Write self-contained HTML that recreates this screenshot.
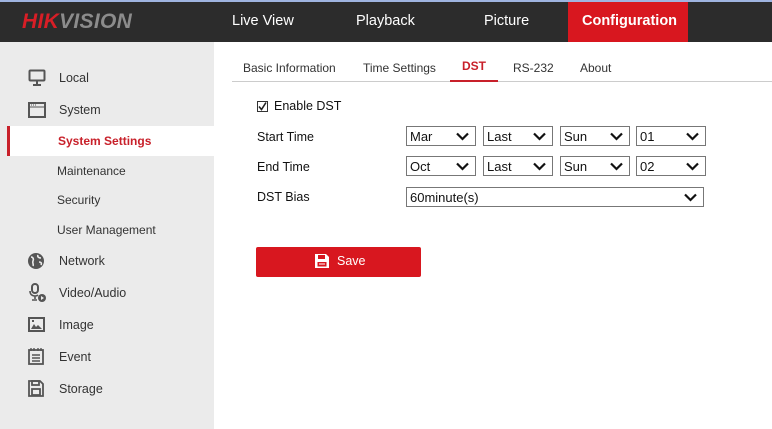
<!DOCTYPE html>
<html><head><meta charset="utf-8"><style>
*{margin:0;padding:0;box-sizing:border-box}
body{width:772px;height:429px;overflow:hidden;background:#fff;font-family:"Liberation Sans",Arial,sans-serif;position:relative}
.a{position:absolute}
.top{left:0;top:0;width:772px;height:42px;background:#2c2c2c;border-top:2px solid #9fb4e0}
.nav{color:#fff;font-size:14.5px;top:13px}
.side{left:0;top:42px;width:214px;height:387px;background:#ebebeb}
.si{font-size:12.5px;color:#333;left:59px}
.sub{font-size:12px;color:#333;left:57px}
.lbl{font-size:12.5px;color:#111}
.sel{height:20px;border:1px solid #777;background:#fff;font-size:13px;color:#111;padding:2px 0 0 3px}
.sel svg{position:absolute;right:6px;top:5px}
.tab{font-size:12px;color:#333;top:61px}
</style></head><body>
<div class="a top"></div>
<div class="a" style="left:22px;top:10px;font-size:21px;font-weight:bold;font-style:italic;letter-spacing:0.3px"><span style="color:#d81e26">HIK</span><span style="color:#8c8c8c">VISION</span></div>
<div class="a nav" style="left:232px">Live View</div>
<div class="a nav" style="left:356px">Playback</div>
<div class="a nav" style="left:484px">Picture</div>
<div class="a" style="left:568px;top:2px;width:120px;height:40px;background:#d8171f"></div>
<div class="a nav" style="left:582px;font-weight:bold">Configuration</div>

<div class="a side"></div>
<div class="a" style="left:7px;top:126px;width:207px;height:30px;background:#fff"></div>
<div class="a" style="left:7px;top:126px;width:3px;height:30px;background:#c8202a"></div>
<svg class="a" style="left:28px;top:69px" width="18" height="18" viewBox="0 0 18 18" fill="none" stroke="#555" stroke-width="2"><rect x="1.5" y="1.5" width="15" height="10" rx="1"/><path d="M9 12v3M5 16h8"/></svg>
<div class="a si" style="top:71px">Local</div>
<svg class="a" style="left:28px;top:102px" width="18" height="16" viewBox="0 0 18 16" fill="none" stroke="#555" stroke-width="2"><rect x="1" y="1" width="16" height="14"/><path d="M1 5h16" stroke-width="1"/><path d="M3 3h1M5 3h1M7 3h1" stroke-width="1"/></svg>
<div class="a si" style="top:103px">System</div>
<div class="a" style="left:58px;top:134px;font-size:12px;font-weight:bold;color:#c8202a">System Settings</div>
<div class="a sub" style="top:164px">Maintenance</div>
<div class="a sub" style="top:193px">Security</div>
<div class="a sub" style="top:223px">User Management</div>
<svg class="a" style="left:27px;top:252px" width="18" height="18" viewBox="0 0 18 18"><circle cx="9" cy="9" r="8" fill="#555"/><path d="M4 5c2 0 3 2 2 4s1 3 0 5M11 3c-1 2 1 3 3 3M12 10c2 0 3 1 2 3" stroke="#ebebeb" stroke-width="1.6" fill="none"/></svg>
<div class="a si" style="top:254px">Network</div>
<svg class="a" style="left:27px;top:283px" width="20" height="20" viewBox="0 0 20 20" fill="#555"><rect x="5" y="1" width="6" height="9" rx="3" fill="none" stroke="#555" stroke-width="2"/><path d="M3 8c0 4 3 5 5 5s3-1 3-1M8 13v3M5 17h5" stroke="#555" stroke-width="1.6" fill="none"/><circle cx="15" cy="15" r="4"/><path d="M14 13v4l3-2z" fill="#ebebeb"/></svg>
<div class="a si" style="top:286px">Video/Audio</div>
<svg class="a" style="left:28px;top:317px" width="17" height="15" viewBox="0 0 17 15"><rect x="1" y="1" width="15" height="13" fill="none" stroke="#555" stroke-width="2"/><path d="M3 12l3-5 2 3 2-2 4 4z" fill="#555"/><rect x="4" y="3" width="2" height="2" fill="#555"/></svg>
<div class="a si" style="top:318px">Image</div>
<svg class="a" style="left:28px;top:347px" width="16" height="18" viewBox="0 0 16 18" fill="none" stroke="#555" stroke-width="1.8"><rect x="1" y="3" width="14" height="14"/><path d="M3 1v3M6 1v3M10 1v3M13 1v3M4 8h8M4 11h8M4 14h8" stroke-width="1.4"/></svg>
<div class="a si" style="top:350px">Event</div>
<svg class="a" style="left:28px;top:380px" width="16" height="17" viewBox="0 0 16 17" fill="none" stroke="#555" stroke-width="1.8"><path d="M1 1h11l3 3v12H1z"/><rect x="4" y="1" width="7" height="4"/><rect x="4" y="9" width="8" height="6"/></svg>
<div class="a si" style="top:382px">Storage</div>

<div class="a tab" style="left:243px">Basic Information</div>
<div class="a tab" style="left:363px">Time Settings</div>
<div class="a tab" style="left:462px;color:#c8202a;font-weight:bold;top:59px">DST</div>
<div class="a tab" style="left:513px">RS-232</div>
<div class="a tab" style="left:580px">About</div>
<div class="a" style="left:232px;top:81px;width:540px;height:1px;background:#ccc"></div>
<div class="a" style="left:450px;top:80px;width:48px;height:2px;background:#c8202a"></div>

<svg class="a" style="left:257px;top:101px" width="11" height="11" viewBox="0 0 11 11"><rect x="0.5" y="0.5" width="10" height="10" fill="#fff" stroke="#333"/><path d="M2 5.5l2.5 3 4.5-7" stroke="#222" stroke-width="1.6" fill="none"/></svg>
<div class="a lbl" style="left:274px;top:99px">Enable DST</div>
<div class="a lbl" style="left:257px;top:130px">Start Time</div>
<div class="a lbl" style="left:257px;top:160px">End Time</div>
<div class="a lbl" style="left:257px;top:190px">DST Bias</div>

<div class="a sel" style="left:406px;top:126px;width:70px">Mar<svg width="13" height="9"><path d="M1 1.5l5.5 5.5 5.5-5.5" stroke="#111" stroke-width="2.2" fill="none"/></svg></div>
<div class="a sel" style="left:483px;top:126px;width:70px">Last<svg width="13" height="9"><path d="M1 1.5l5.5 5.5 5.5-5.5" stroke="#111" stroke-width="2.2" fill="none"/></svg></div>
<div class="a sel" style="left:560px;top:126px;width:70px">Sun<svg width="13" height="9"><path d="M1 1.5l5.5 5.5 5.5-5.5" stroke="#111" stroke-width="2.2" fill="none"/></svg></div>
<div class="a sel" style="left:636px;top:126px;width:70px">01<svg width="13" height="9"><path d="M1 1.5l5.5 5.5 5.5-5.5" stroke="#111" stroke-width="2.2" fill="none"/></svg></div>
<div class="a sel" style="left:406px;top:156px;width:70px">Oct<svg width="13" height="9"><path d="M1 1.5l5.5 5.5 5.5-5.5" stroke="#111" stroke-width="2.2" fill="none"/></svg></div>
<div class="a sel" style="left:483px;top:156px;width:70px">Last<svg width="13" height="9"><path d="M1 1.5l5.5 5.5 5.5-5.5" stroke="#111" stroke-width="2.2" fill="none"/></svg></div>
<div class="a sel" style="left:560px;top:156px;width:70px">Sun<svg width="13" height="9"><path d="M1 1.5l5.5 5.5 5.5-5.5" stroke="#111" stroke-width="2.2" fill="none"/></svg></div>
<div class="a sel" style="left:636px;top:156px;width:70px">02<svg width="13" height="9"><path d="M1 1.5l5.5 5.5 5.5-5.5" stroke="#111" stroke-width="2.2" fill="none"/></svg></div>
<div class="a sel" style="left:406px;top:187px;width:298px">60minute(s)<svg width="13" height="9"><path d="M1 1.5l5.5 5.5 5.5-5.5" stroke="#111" stroke-width="2.2" fill="none"/></svg></div>

<div class="a" style="left:256px;top:247px;width:165px;height:30px;background:#d8171f;border-radius:2px"></div>
<svg class="a" style="left:315px;top:254px" width="14" height="14" viewBox="0 0 14 14" fill="#fff"><path d="M0 0h11l3 3v11H0z"/><rect x="3" y="1" width="7" height="4" fill="#d8171f"/><rect x="2.5" y="8" width="9" height="4.5" fill="#d8171f"/><rect x="4" y="9.5" width="6" height="1" fill="#fff"/></svg>
<div class="a" style="left:337px;top:254px;color:#fff;font-size:12.5px">Save</div>
</body></html>
